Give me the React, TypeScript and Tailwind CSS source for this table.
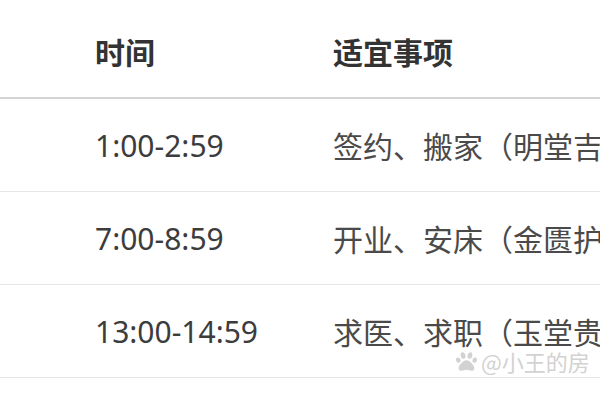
import React from "react";
import { FaPaw } from "react-icons/fa";

const rows = [
  { time: "1:00-2:59", text: "签约、搬家（明堂吉时）" },
  { time: "7:00-8:59", text: "开业、安床（金匮护佑）" },
  { time: "13:00-14:59", text: "求医、求职（玉堂贵人）" },
];

const cjk = { fontFamily: '"Microsoft YaHei", "Noto Sans CJK SC", sans-serif' };
const num = { fontFamily: '"Noto Sans", "Noto Sans CJK SC", sans-serif' };

export default function App() {
  return (
    <div className="relative w-[600px] h-[400px] overflow-hidden bg-white" style={cjk}>
      <div className="flex h-[99px] items-center border-b-2 border-[#d4d4d4] whitespace-nowrap">
        <div className="w-[333px] shrink-0 pl-[95px] text-[30px] font-bold text-[#333333] pt-[6px]">时间</div>
        <div className="text-[30px] font-bold text-[#333333] pt-[6px]">适宜事项</div>
      </div>
      {rows.map((r) => (
        <div
          key={r.time}
          className="flex h-[93px] items-center border-b border-[#e6e6e6] whitespace-nowrap"
        >
          <div className="w-[333px] shrink-0 pl-[95px] text-[30px] text-[#3c3c3c]" style={num}>
            {r.time}
          </div>
          <div className="text-[30px] text-[#4a4a4a]">{r.text}</div>
        </div>
      ))}
      <div className="absolute left-[456px] top-[349px] flex items-center gap-[2px] whitespace-nowrap text-[22px] leading-[24px] text-[#d2d2d2]">
        <FaPaw className="w-[21px] h-[21px]" />
        <span className="ml-[2px]">@小王的房</span>
      </div>
    </div>
  );
}
